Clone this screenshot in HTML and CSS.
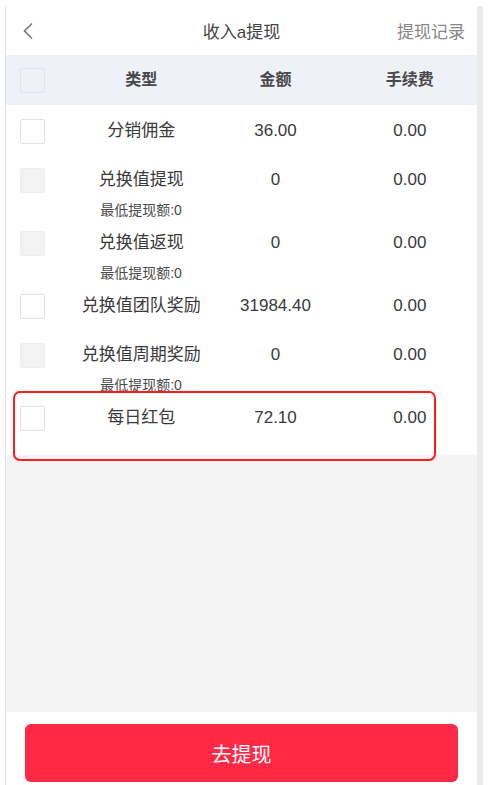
FILE: index.html
```html
<!DOCTYPE html>
<html lang="zh">
<head>
    <meta charset="UTF-8">
    <meta name="viewport" content="width=device-width, initial-scale=1.0">
    <title>收入a提现</title>
    <link rel="stylesheet" href="styles.css">
</head>
<body>

    <div class="frame">
        <div class="page">
            <div class="nav">
                <span class="back">
                    <svg width="12" height="18" viewBox="0 0 12 18"><polyline points="10,1.5 2.5,9 10,16.5" fill="none" stroke="#777" stroke-width="1.6" stroke-linejoin="miter"/></svg>
                </span>
                <span class="title">收入a提现</span>
                <span class="record">提现记录</span>
            </div>

            <div class="thead">
                <span class="cell-check"><i class="box head-box"></i></span>
                <span class="col">类型</span>
                <span class="col">金额</span>
                <span class="col">手续费</span>
            </div>

            <div class="list">
                <div class="row">
                    <div class="main">
                        <span class="cell-check"><i class="box"></i></span>
                        <span class="col">分销佣金</span>
                        <span class="col">36.00</span>
                        <span class="col">0.00</span>
                    </div>
                </div>
                <div class="row">
                    <div class="main">
                        <span class="cell-check"><i class="box disabled"></i></span>
                        <span class="col">兑换值提现</span>
                        <span class="col">0</span>
                        <span class="col">0.00</span>
                    </div>
                    <div class="sub">最低提现额:0</div>
                </div>
                <div class="row">
                    <div class="main">
                        <span class="cell-check"><i class="box disabled"></i></span>
                        <span class="col">兑换值返现</span>
                        <span class="col">0</span>
                        <span class="col">0.00</span>
                    </div>
                    <div class="sub">最低提现额:0</div>
                </div>
                <div class="row">
                    <div class="main">
                        <span class="cell-check"><i class="box"></i></span>
                        <span class="col">兑换值团队奖励</span>
                        <span class="col">31984.40</span>
                        <span class="col">0.00</span>
                    </div>
                </div>
                <div class="row">
                    <div class="main">
                        <span class="cell-check"><i class="box disabled"></i></span>
                        <span class="col">兑换值周期奖励</span>
                        <span class="col">0</span>
                        <span class="col">0.00</span>
                    </div>
                    <div class="sub">最低提现额:0</div>
                </div>
                <div class="row marked">
                    <div class="main">
                        <span class="cell-check"><i class="box"></i></span>
                        <span class="col">每日红包</span>
                        <span class="col">72.10</span>
                        <span class="col">0.00</span>
                    </div>
                    <div class="highlight"></div>
                </div>
            </div>

            <div class="blank"></div>

            <div class="footer">
                <button class="submit-btn">去提现</button>
            </div>
        </div>
    </div>

</body>
</html>
```

FILE: styles.css
```css
html, body {
    margin: 0;
    padding: 0;
    background: #fff;
}
body {
    font-family: "Liberation Sans", "Noto Sans CJK SC", sans-serif;
    color: #333;
    padding-top: 6px;
    padding-left: 5px;
}
.frame {
    width: 471px;
    height: 779px;
    border-left: 1px solid #e4e4e4;
    border-right: 6px solid #ebebeb;
    overflow: hidden;
}
.page {
    display: flex;
    flex-direction: column;
    height: 100%;
}
.nav {
    height: 49px;
    display: flex;
    align-items: center;
    position: relative;
    background: #fff;
}
.back {
    margin-left: 16px;
    display: flex;
    align-items: center;
}
.title {
    position: absolute;
    left: 0;
    right: 0;
    text-align: center;
    font-size: 17px;
    color: #444;
    pointer-events: none;
}
.record {
    margin-left: auto;
    margin-right: 12px;
    font-size: 17px;
    color: #888;
}
.thead, .main {
    display: grid;
    grid-template-columns: 68px 1fr 1fr 1fr;
    align-items: center;
}
.thead {
    height: 50px;
    background: #eef1f8;
    font-size: 16px;
    font-weight: bold;
    color: #484848;
}
.col {
    text-align: center;
    white-space: nowrap;
    line-height: 20px;
}
.cell-check {
    display: flex;
    padding-left: 14px;
}
.box {
    display: block;
    width: 23px;
    height: 23px;
    border: 1px solid #e3e3e3;
    border-radius: 2px;
    background: #fff;
}
.box.disabled {
    background: #f3f3f3;
    border-color: #eeeeee;
}
.head-box {
    background: #eef1f8;
    border-color: #dfe3ec;
}
.list {
    background: #fff;
    padding-bottom: 14px;
}
.row {
    position: relative;
}
.main {
    height: 46px;
    padding-top: 3px;
    font-size: 17px;
    color: #3a3a3a;
}
.sub {
    margin-left: 68px;
    width: 134px;
    text-align: center;
    height: 14px;
    line-height: 14px;
    font-size: 14px;
    color: #4a4a4a;
}
.highlight {
    position: absolute;
    left: 7px;
    top: -1px;
    width: 419px;
    height: 66px;
    border: 2.5px solid #ff1c1c;
    border-radius: 7px;
}
.blank {
    flex: 1;
    background: #f4f4f4;
}
.footer {
    height: 73px;
    background: #fff;
    padding: 12px 19px 0;
    box-sizing: border-box;
}
.submit-btn {
    display: block;
    width: 100%;
    height: 58px;
    border: none;
    border-radius: 6px;
    background: #ff2845;
    color: #fff;
    font-family: "Liberation Sans", "Noto Sans CJK SC", sans-serif;
    font-size: 20px;
    cursor: pointer;
}
```
